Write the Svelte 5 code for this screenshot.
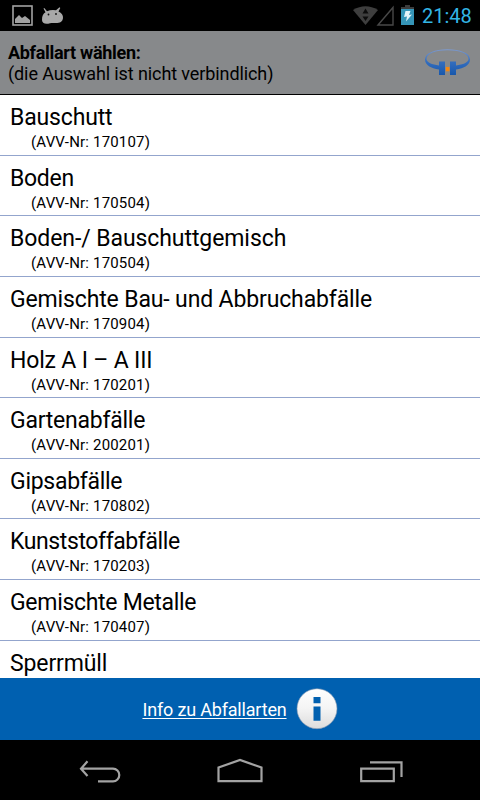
<script>
  // tracking is the letter spacing of the name, in px
  const wasteTypes = [
    {name: 'Bauschutt', avv: '170107', tracking: -0.15},
    {name: 'Boden', avv: '170504', tracking: -0.3},
    {name: 'Boden-/ Bauschuttgemisch', avv: '170504', tracking: -0.08},
    {name: 'Gemischte Bau- und Abbruchabfälle', avv: '170904', tracking: -0.14},
    {name: 'Holz A I – A III', avv: '170201', tracking: -0.18},
    {name: 'Gartenabfälle', avv: '200201', tracking: -0.24},
    {name: 'Gipsabfälle', avv: '170802', tracking: -0.28},
    {name: 'Kunststoffabfälle', avv: '170203', tracking: -0.4},
    {name: 'Gemischte Metalle', avv: '170407', tracking: -0.3},
    {name: 'Sperrmüll', tracking: -0.12}
  ];
</script>

<div class="screen">
  <div class="status">
    <svg class="notifications" width="70" height="31" viewBox="0 0 70 31">
      <rect x="13" y="6" width="19" height="19" fill="none" stroke="#a2a2a2" stroke-width="1.6" />
      <path d="M15 23v-4l4-4 3 3 3-2 5 4v3z" fill="#a2a2a2" />
      <path d="M43.500 8.500l.8-.5 2.700 3.200q4-1.700 9-.9l3.500-3 .8.700-1.800 3.600q4.800 2.400 4.500 6.400c-.5 4-3 5-7 5-3 0-4-.3-6 .3-5 1.500-8-.3-8-3.300 0-4 1-6.300 3.500-7.800z" fill="#a8a8a8" />
      <circle cx="48.500" cy="14.500" r=".9" fill="#111" />
      <circle cx="56" cy="14" r=".9" fill="#111" />
    </svg>
    <svg class="signals" width="65" height="31" viewBox="0 0 65 31">
      <path d="M2 10q12.500-7.500 25 0L14.500 25z" fill="#3e3e3e" />
      <path d="M14.500 8.500l3 5h-6zM14.500 21l-3-4.500h6z" fill="#0c0c0c" />
      <path d="M27 25L42 7.500V25z" fill="none" stroke="#484848" stroke-width="1.400" />
      <path d="M50 7h4V5h5v2h4v3H50z" fill="#3c3c3c" />
      <path d="M50 9h13v16H50z" fill="#3595b8" />
      <path d="M54.500 11h5l-1.500 4 3-.5-6 7 1-5-3 .5z" fill="#e5f4fa" />
    </svg>
    <span class="clock">21:48</span>
  </div>

  <header>
    <div class="heading">
      <strong>Abfallart wählen:</strong>
      <span>(die Auswahl ist nicht verbindlich)</span>
    </div>
    <svg class="logo" width="47" height="28" viewBox="0 0 47 28">
      <defs>
        <linearGradient id="ring" x1="0" y1="0" x2="0" y2="1">
          <stop offset="0" stop-color="#7e9bd0" />
          <stop offset=".45" stop-color="#356fc0" />
          <stop offset="1" stop-color="#1858ac" />
        </linearGradient>
      </defs>
      <path d="M15 21.500C7 20.500 1 17 1 11.500 1 5 11 1.300 23.500 1.300S46 5 46 11.500c0 5.500-6 9-14 10V27h-6V13.500h6v4c7-1 12.500-3 12.500-6.500 0-5.500-9.500-8.700-21-8.700S2.500 5.500 2.500 11c0 3.500 5.500 5.500 12.500 6.500v-4h6V27h-6z" fill="url(#ring)" />
      <path d="M21.800 19h3.700v4.300h-3.700z" fill="#f5870f" />
    </svg>
  </header>

  <ul>
    {#each wasteTypes as type}
      <li>
        <span class="name" style={`letter-spacing: ${type.tracking}px`}>{type.name}</span>
        {#if type.avv}
          <span class="avv">(AVV-Nr: {type.avv})</span>
        {/if}
      </li>
    {/each}
  </ul>

  <footer>
    <a href="#info">Info zu Abfallarten</a>
    <svg width="42" height="42" viewBox="0 0 42 42">
      <defs>
        <linearGradient id="disc" x1="0" y1="0" x2="0" y2="1">
          <stop offset="0" stop-color="#fff" />
          <stop offset=".5" stop-color="#f4f4f4" />
          <stop offset="1" stop-color="#dcdcdc" />
        </linearGradient>
      </defs>
      <circle cx="21" cy="20.700" r="20" fill="url(#disc)" stroke="#8295ae" stroke-width=".6" />
      <path d="M17.500 9h7v6.200h-7zM17.500 18.500h7v14.200h-7z" fill="#0060b0" />
    </svg>
  </footer>

  <nav>
    <svg width="480" height="60" viewBox="0 0 480 60" fill="none" stroke="#a3a3a3" stroke-width="2.200">
      <path d="M80.500 28.700h32.500a6.300 6.300 0 0 1 0 12.600H98M87.500 21.300L81 28.700l6.500 7.300" />
      <path d="M218.500 41.200V27.500L240 20l21.500 7.500v13.700z" />
      <path d="M361.200 28.700h32.600v12.500h-32.600zM370 22.400h31.500V37" />
    </svg>
  </nav>
</div>

<style>
  :global(body) {
    margin: 0;
    background: #000;
  }

  .screen {
    display: flex;
    flex-direction: column;
    width: 480px;
    height: 800px;
    overflow: hidden;
    background: #000;
    color: #000;
    font-family: Roboto, sans-serif;
  }

  .status {
    display: flex;
    flex: 0 0 31px;
    align-items: center;
  }

  .notifications,
  .signals {
    flex: none;
  }

  .signals {
    margin-left: 281px;
  }

  .clock {
    margin-left: 6px;
    padding-top: 2px;
    color: #33b5e5;
    font-size: 20px;
    line-height: 29px;
  }

  header {
    box-sizing: border-box;
    display: flex;
    flex: 0 0 64px;
    justify-content: space-between;
    padding: 11px 9px 0 8px;
    background: #87898b;
    border-bottom: 1px solid #000;
  }

  .heading {
    display: flex;
    flex-direction: column;
    font-size: 18px;
    line-height: 21px;
    letter-spacing: -0.1px;
  }

  .heading strong {
    letter-spacing: -0.3px;
  }

  .logo {
    margin-top: 6px;
  }

  ul {
    flex: 0 0 583px;
    margin: 0;
    padding: 0;
    overflow: hidden;
    background: #fff;
    list-style: none;
  }

  li {
    box-sizing: border-box;
    display: flex;
    flex-direction: column;
    height: 60.65px;
    padding: 8px 10px 0;
    border-bottom: 1px solid #93a5cd;
  }

  .name {
    font-size: 23px;
    line-height: 29px;
  }

  .avv {
    padding-left: 21px;
    font-size: 15px;
    line-height: 21px;
    letter-spacing: 0.18px;
  }

  footer {
    display: flex;
    flex: 0 0 62px;
    align-items: center;
    justify-content: center;
    gap: 9px;
    background: #0060b0;
  }

  footer a {
    color: #fff;
    font-size: 18px;
    letter-spacing: -0.18px;
    text-underline-offset: 2px;
    text-decoration-thickness: 1px;
  }

  nav {
    flex: 0 0 60px;
  }
</style>
